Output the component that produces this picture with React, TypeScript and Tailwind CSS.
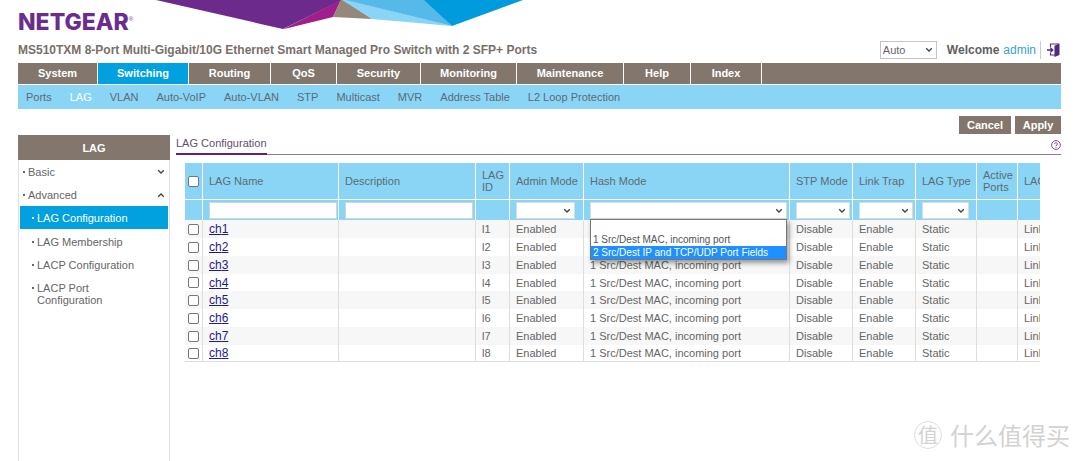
import React from "react";

const mainTabs = [
  { label: "System", width: "w-20" },
  { label: "Switching", width: "w-[91px]" },
  { label: "Routing", width: "w-[82px]" },
  { label: "QoS", width: "w-[66px]" },
  { label: "Security", width: "w-[84px]" },
  { label: "Monitoring", width: "w-24" },
  { label: "Maintenance", width: "w-[107px]" },
  { label: "Help", width: "w-[67px]" },
  { label: "Index", width: "w-[71px]" },
];

const subTabs = [
  "Ports",
  "LAG",
  "VLAN",
  "Auto-VoIP",
  "Auto-VLAN",
  "STP",
  "Multicast",
  "MVR",
  "Address Table",
  "L2 Loop Protection",
];

const sideLinks = [
  "LAG Configuration",
  "LAG Membership",
  "LACP Configuration",
  "LACP Port Configuration",
];

const rows = [1, 2, 3, 4, 5, 6, 7, 8];

const hashOptions = [
  "",
  "1 Src/Dest MAC, incoming port",
  "2 Src/Dest IP and TCP/UDP Port Fields",
];

function Chevron({ className = "" }: { className?: string }) {
  return (
    <svg
      viewBox="0 0 8 6"
      className={`h-1.5 w-2 ${className}`}
      fill="none"
      stroke="#444"
      strokeWidth="1.3"
      aria-hidden="true"
    >
      <path d="M1.2 1.2 4 4 6.8 1.2" />
    </svg>
  );
}

function HeaderArt() {
  return (
    <svg
      className="absolute top-0 left-[156px] h-[30px] w-[367px]"
      viewBox="156 0 367 30"
      aria-hidden="true"
    >
      <polygon points="156,0 342,0 283,29" fill="#6b2a8c" />
      <polygon points="341,0 333,17 283,29.3" fill="#a01e8b" />
      <polygon points="341,0 333,17 372,19 344,0" fill="#94887b" />
      <polygon points="342,0 348,0 452,26 372,19" fill="#8ad4f6" />
      <polygon points="346,0 425,0 452,26" fill="#55b9ea" />
      <polygon points="424,0 523,0 452,26" fill="#009bdc" />
    </svg>
  );
}

function LogoutIcon() {
  return (
    <svg viewBox="0 0 13 14" className="h-3.5 w-[13px]" aria-hidden="true">
      <path d="M3.5 4.3V1H12M3.5 9.7V12H8" fill="none" stroke="#5b2d82" strokeWidth="1.2" />
      <path d="M7.5 2.8 12.5 .6V12l-5 2z" fill="#4f2a7f" />
      <path d="M0 7h5.4M3.4 4.8 5.8 7 3.4 9.2" fill="none" stroke="#4f2a7f" strokeWidth="1.3" />
    </svg>
  );
}

function FilterSelect({
  label,
  width,
  children,
}: {
  label: string;
  width: string;
  children?: React.ReactNode;
}) {
  return (
    <div className={`relative ${width}`}>
      <select
        aria-label={label}
        className="block h-[17px] w-full appearance-none border border-[#d5dde2] bg-white text-[11px] outline-none"
      >
        <option></option>
      </select>
      <Chevron className="pointer-events-none absolute top-1.5 right-1" />
      {children}
    </div>
  );
}

function HashMenu() {
  return (
    <ul
      role="listbox"
      aria-label="Hash Mode options"
      className="absolute top-[17px] left-0 z-10 w-[197px] border border-[#767676] bg-white text-[10px] leading-[13px] shadow-[2px_3px_5px_rgba(0,0,0,0.4)]"
    >
      {hashOptions.map((option, i) => (
        <li
          key={i}
          role="option"
          aria-selected={i === 2}
          className={`h-[13px] pl-0.5 whitespace-nowrap ${i === 2 ? "bg-[#1e90ff] text-white" : "text-[#555]"}`}
        >
          {option}
        </li>
      ))}
    </ul>
  );
}

const headCell = "border-r border-b border-white pl-1.5 text-left font-normal leading-3 last:border-r-0";
const filterCell = "border-r border-white pl-1.5 last:border-r-0";
const bodyCell = "border-r border-[#dedede] pl-1.5 whitespace-nowrap last:border-r-0";
const textBox = "block h-[17px] w-32 border border-[#c9d6dd] bg-white px-1 text-[11px] outline-none";
const tick = "mx-auto block h-[11px] w-[11px] appearance-none rounded-[2px] border border-[#767676] bg-white";

function LagTable() {
  return (
    <div className="mr-[22px] ml-[9px] overflow-x-hidden pb-6">
      <table className="w-[894px] table-fixed border-separate border-spacing-0 text-[11px] leading-4 text-[#666]">
        <colgroup>
          <col className="w-[18px]" />
          <col className="w-[136px]" />
          <col className="w-[137px]" />
          <col className="w-[34px]" />
          <col className="w-[74px]" />
          <col className="w-[206px]" />
          <col className="w-[63px]" />
          <col className="w-[63px]" />
          <col className="w-[61px]" />
          <col className="w-[41px]" />
          <col className="w-[61px]" />
        </colgroup>
        <thead className="bg-[#8ad5f5] text-[#5b6b76]">
          <tr className="h-[37px]">
            <th className="border-r border-b border-white">
              <input type="checkbox" aria-label="Select all" className={tick} />
            </th>
            <th className={headCell}>LAG Name</th>
            <th className={headCell}>Description</th>
            <th className={headCell}>LAG ID</th>
            <th className={headCell}>Admin Mode</th>
            <th className={headCell}>Hash Mode</th>
            <th className={headCell}>STP Mode</th>
            <th className={headCell}>Link Trap</th>
            <th className={headCell}>LAG Type</th>
            <th className={headCell}>Active Ports</th>
            <th className={headCell}>LAG State</th>
          </tr>
          <tr className="h-5">
            <td className={filterCell}></td>
            <td className={filterCell}>
              <input type="text" aria-label="LAG Name" className={textBox} />
            </td>
            <td className={filterCell}>
              <input type="text" aria-label="Description" className={textBox} />
            </td>
            <td className={filterCell}></td>
            <td className={filterCell}>
              <FilterSelect label="Admin Mode" width="w-[59px]" />
            </td>
            <td className={filterCell}>
              <FilterSelect label="Hash Mode" width="w-[197px]">
                <HashMenu />
              </FilterSelect>
            </td>
            <td className={filterCell}>
              <FilterSelect label="STP Mode" width="w-[54px]" />
            </td>
            <td className={filterCell}>
              <FilterSelect label="Link Trap" width="w-[54px]" />
            </td>
            <td className={filterCell}>
              <FilterSelect label="LAG Type" width="w-[47px]" />
            </td>
            <td className={filterCell}></td>
            <td className={filterCell}></td>
          </tr>
        </thead>
        <tbody className="[&>tr:last-child>td]:border-b">
          {rows.map((n) => (
            <tr key={n} className="h-[18px] odd:bg-[#f7f7f7] nth-[4n]:h-[17px]">
              <td className="border-r border-[#dedede]">
                <input type="checkbox" aria-label={`Select ch${n}`} className={tick} />
              </td>
              <td className={bodyCell}>
                <a href="#" className="text-[12px] text-[#1f1a8c] underline">
                  ch{n}
                </a>
              </td>
              <td className={bodyCell}></td>
              <td className={bodyCell}>l{n}</td>
              <td className={bodyCell}>Enabled</td>
              <td className={bodyCell}>1 Src/Dest MAC, incoming port</td>
              <td className={bodyCell}>Disable</td>
              <td className={bodyCell}>Enable</td>
              <td className={bodyCell}>Static</td>
              <td className={bodyCell}></td>
              <td className={bodyCell}>Link Down</td>
            </tr>
          ))}
        </tbody>
      </table>
    </div>
  );
}

function Bullet() {
  return <span className="mt-[5px] mr-[3px] h-0.5 w-0.5 shrink-0 bg-current" />;
}

function Sidebar() {
  return (
    <aside className="w-[152px] shrink-0 border-x border-[#e2e2e2] text-[11px] leading-3 text-[#666]">
      <h2 className="-mx-px flex h-[25px] items-center justify-center bg-[#83776d] font-bold text-white">
        LAG
      </h2>
      <button type="button" className="flex h-[23px] w-full items-center justify-between px-1">
        <span className="flex">
          <Bullet />
          Basic
        </span>
        <Chevron />
      </button>
      <button type="button" className="flex h-[23px] w-full items-center justify-between px-1">
        <span className="flex">
          <Bullet />
          Advanced
        </span>
        <Chevron className="rotate-180" />
      </button>
      <ul className="mx-px">
        {sideLinks.map((label, i) => (
          <li key={label} className="first:mb-px">
            <a
              href="#"
              className={`flex min-h-[23px] pt-[6px] pr-5 pb-[5px] pl-3 ${i === 0 ? "bg-[#00a1de] text-white" : ""}`}
            >
              <Bullet />
              {label}
            </a>
          </li>
        ))}
      </ul>
    </aside>
  );
}

export default function App() {
  return (
    <div className="relative flex min-h-screen flex-col bg-white px-[18px] font-['Liberation_Sans',Arial,sans-serif]">
      <HeaderArt />
      <header>
        <div className="flex h-9 items-end">
          <span className="font-[Inter,sans-serif] text-[23px] leading-7 font-extrabold text-[#6a2c8e]">
            NETGEAR
          </span>
          <span className="mb-3.5 text-[6px] leading-none text-[#6a2c8e]">®</span>
        </div>
        <div className="mr-0.5 flex h-[27px] items-center justify-between">
          <h1 className="text-[12px] font-bold text-[#777069]">
            MS510TXM 8-Port Multi-Gigabit/10G Ethernet Smart Managed Pro Switch with 2 SFP+ Ports
          </h1>
          <div className="flex items-center text-[12px]">
            <div className="relative mr-2.5">
              <select
                aria-label="Language"
                className="block h-[18px] w-[57px] appearance-none border border-[#c4c4c4] bg-white pl-0.5 text-[11px] leading-4 text-[#666] outline-none"
              >
                <option>Auto</option>
              </select>
              <Chevron className="pointer-events-none absolute top-1.5 right-1" />
            </div>
            <span className="mr-1 font-bold text-[#5f5f5f]">Welcome</span>
            <a href="#" className="mr-1 text-[#3a9fd0]">
              admin
            </a>
            <button type="button" aria-label="Log out" className="border-l border-[#ccc] py-0.5 pl-1.5">
              <LogoutIcon />
            </button>
          </div>
        </div>
      </header>

      <nav aria-label="Main" className="mr-px flex h-[22px] border-b border-white bg-[#83776d]">
        {mainTabs.map((tab) => (
          <a
            key={tab.label}
            href="#"
            className={`flex items-center justify-center border-r border-white text-[11px] font-bold text-white ${tab.width} ${tab.label === "Switching" ? "bg-[#00a1de]" : ""}`}
          >
            {tab.label}
          </a>
        ))}
      </nav>
      <nav aria-label="Switching" className="mr-px flex h-6 items-center gap-[18px] bg-[#8ad5f5] pl-2 text-[11px] text-[#5b6b76]">
        {subTabs.map((label) => (
          <a key={label} href="#" className={label === "LAG" ? "text-white" : ""}>
            {label}
          </a>
        ))}
      </nav>

      <div className="mt-[7px] mr-px flex justify-end gap-1 text-[11px] font-bold text-white">
        <button type="button" className="h-[18px] w-[52px] bg-[#83776d]">
          Cancel
        </button>
        <button type="button" className="h-[18px] w-[46px] bg-[#83776d]">
          Apply
        </button>
      </div>

      <div className="mt-px flex grow gap-1.5">
        <Sidebar />
        <main className="min-w-0 grow">
          <div className="mr-px mb-2 flex h-5 items-stretch justify-between border-b border-[#8e7a96]">
            <h2 className="-mb-px border-b-2 border-[#5b2477] pt-0.5 text-[11px] leading-3 text-[#63506f]">
              LAG Configuration
            </h2>
            <button type="button" aria-label="Help" className="self-center pt-px">
              <svg viewBox="0 0 10 10" className="h-2.5 w-2.5" fill="none" stroke="#7a4d94" aria-hidden="true">
                <circle cx="5" cy="5" r="4.4" />
                <path d="M3.6 4.1C3.6 2.2 6.4 2.2 6.4 4 6.4 5 5 5 5 6.1M5 6.9V7.9" />
              </svg>
            </button>
          </div>
          <LagTable />
        </main>
      </div>

      <div className="pointer-events-none absolute right-[10px] bottom-2.5 flex items-center gap-2 font-['Noto_Sans_CJK_SC',sans-serif] text-[#d2d2d2]">
        <span className="flex h-7 w-7 items-center justify-center rounded-full border border-[#dedede] text-[20px] leading-none">
          值
        </span>
        <span className="text-[24px] leading-8">什么值得买</span>
      </div>
    </div>
  );
}
